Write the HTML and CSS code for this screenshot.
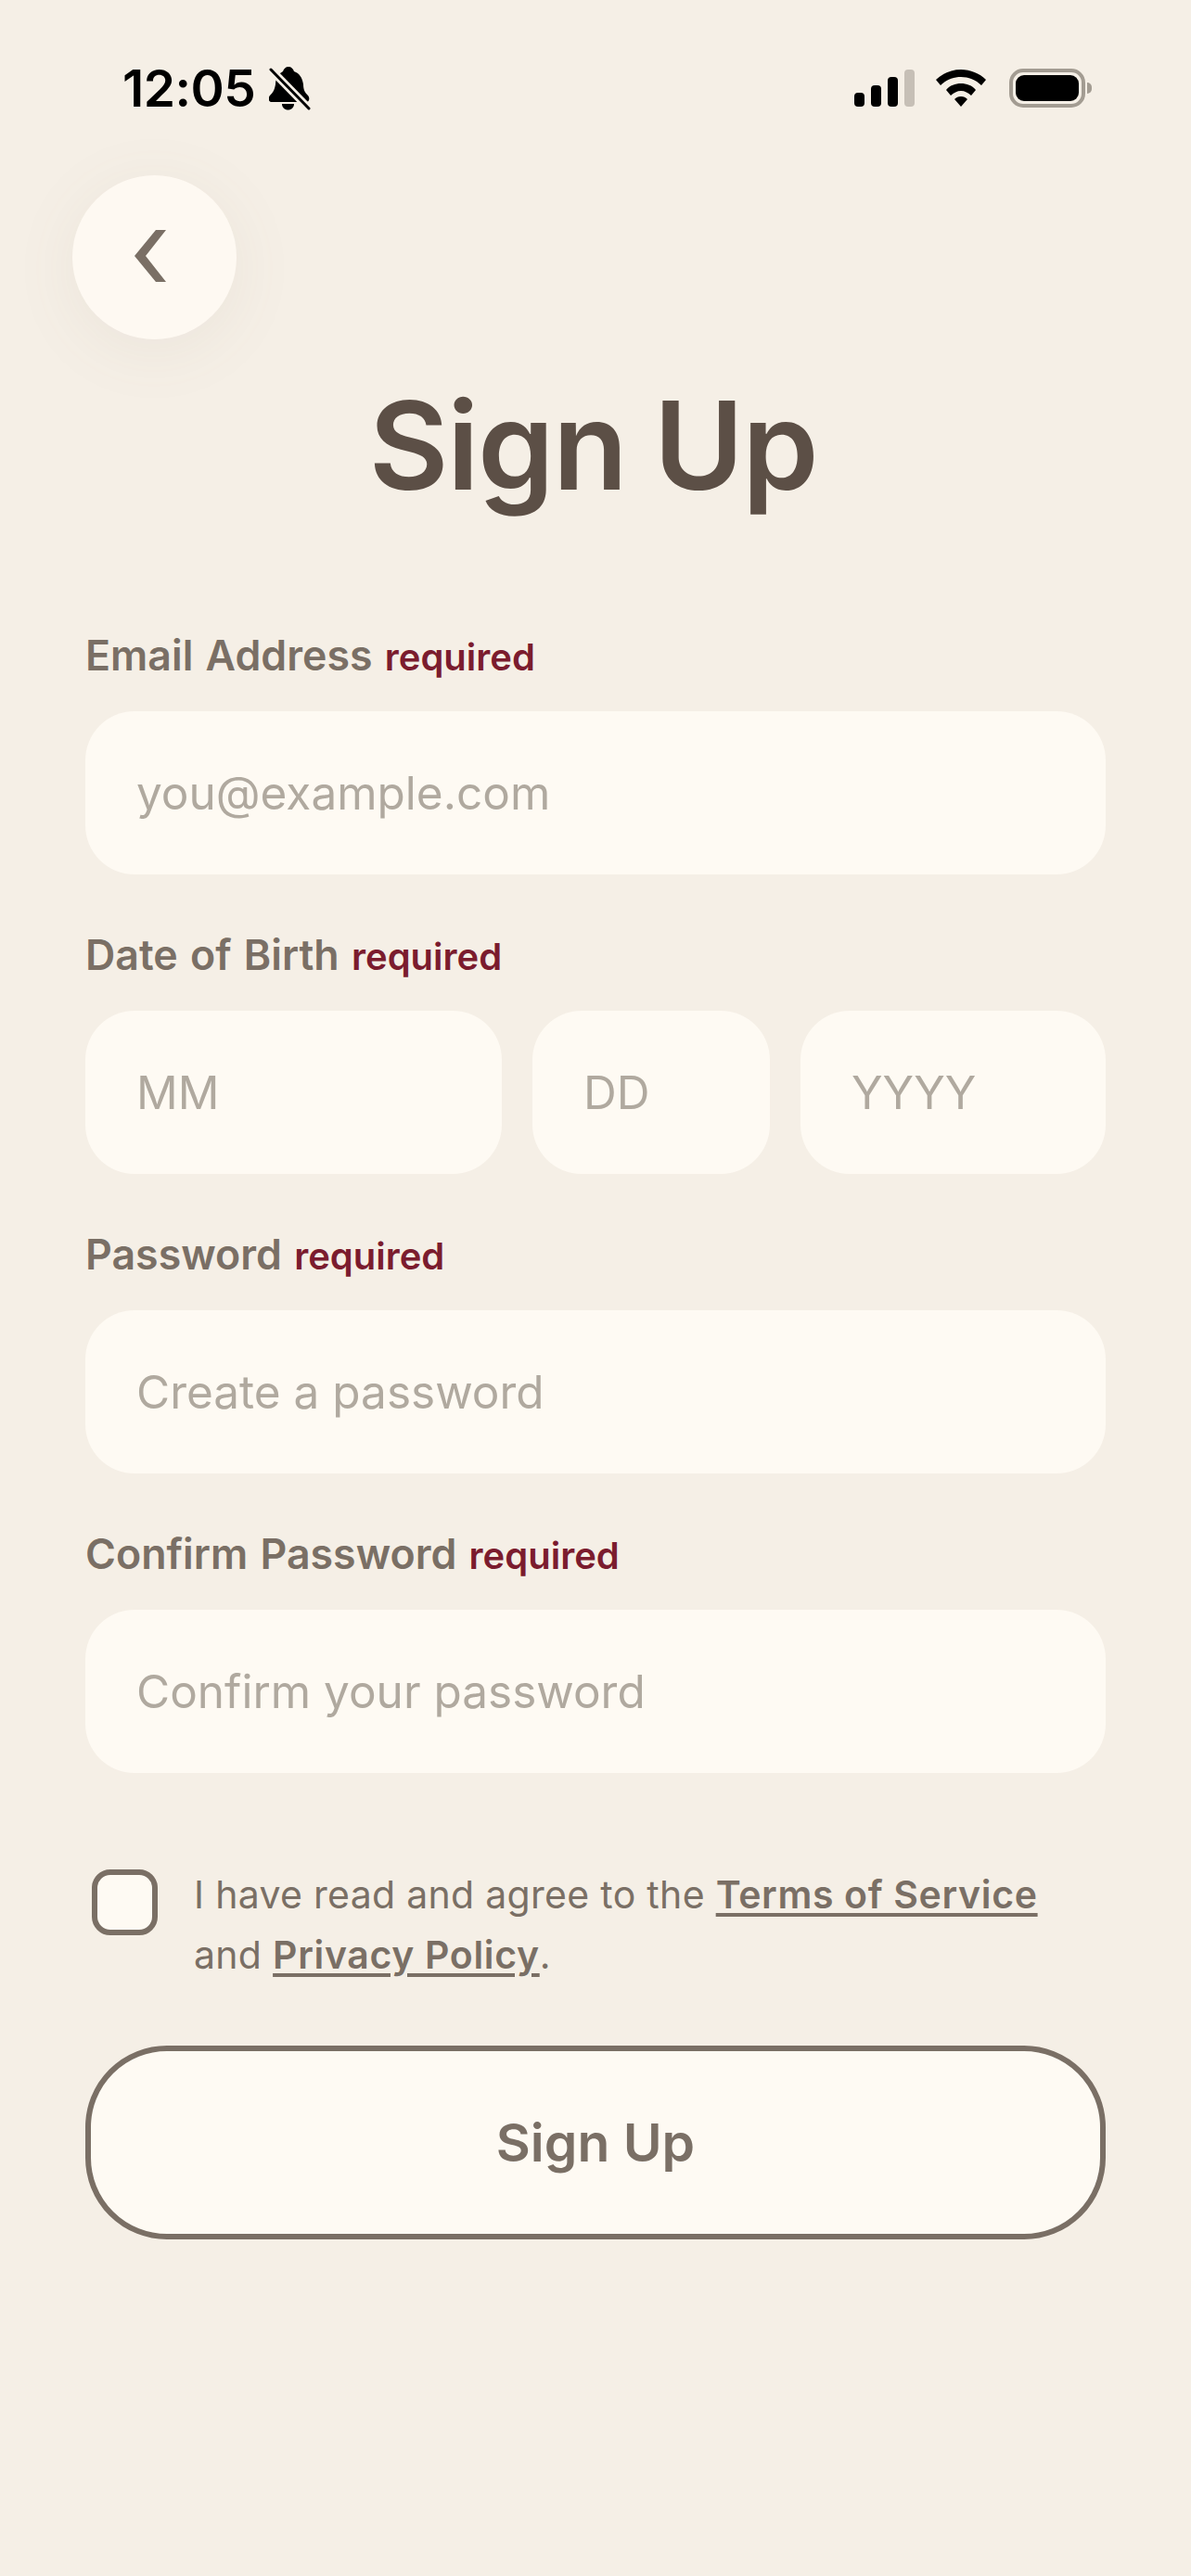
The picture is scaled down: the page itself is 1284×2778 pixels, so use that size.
FILE: index.html
```html
<!DOCTYPE html>
<html lang="en">
<head>
<meta charset="utf-8">
<title>Sign Up</title>
<link rel="stylesheet" href="styles.css">
</head>
<body>
<div class="screen">
  <header class="status">
    <div class="status-left">
      <span class="time">12:05</span>
      <svg class="bell" viewBox="0 0 45 47" width="45" height="47">
        <path d="M21 0c3 0 5 2 6 5 6 2 9 7 10 14 0 6 2 9 5 12 2 2 2 7-2 7H3c-4 0-4-5-2-7 3-3 5-6 6-12 0-7 4-12 8-14 1-3 3-5 6-5z" fill="#000"/>
        <path d="M14 40h13c0 4-3 6.500-6.500 6.500S14 44 14 40z" fill="#000"/>
        <path d="M0 1 44 46" stroke="#f5efe6" stroke-width="8.500"/>
        <path d="M2 3 43 45" stroke="#000" stroke-width="3" stroke-linecap="round"/>
      </svg>
    </div>
    <div class="status-right">
      <div class="signal">
        <i class="bar b1"></i><i class="bar b2"></i><i class="bar b3"></i><i class="bar b4"></i>
      </div>
      <svg class="wifi" viewBox="0 0 54 40" width="54" height="40">
        <path d="M27 0c10 0 20 4 27 11l-5 6C43 11 35 8 27 8S11 11 5 17l-5-6C7 4 17 0 27 0z" fill="#000"/>
        <path d="M27 15c6 0 12 2 16 7l-5 6c-3-3-7-5-11-5s-8 2-11 5l-5-6c4-5 10-7 16-7z" fill="#000"/>
        <path d="M27 29c3 0 5 1 7 3l-7 8-7-8c2-2 4-3 7-3z" fill="#000"/>
      </svg>
      <div class="battery"><div class="battery-fill"></div></div>
      <i class="battery-cap"></i>
    </div>
  </header>

  <button class="back" type="button" aria-label="Back">
    <svg viewBox="0 0 34 56" width="34" height="56"><path d="M34 0H23L0 28l23 28h11L12 28z" fill="#7a6f65"/></svg>
  </button>

  <h1 class="title">Sign Up</h1>

  <form class="form">
    <div class="group">
      <div class="label">Email Address <span class="req">required</span></div>
      <div class="field" role="textbox">you@example.com</div>
    </div>
    <div class="group">
      <div class="label">Date of Birth <span class="req">required</span></div>
      <div class="dob">
        <div class="field mm" role="textbox">MM</div>
        <div class="field dd" role="textbox">DD</div>
        <div class="field yy" role="textbox">YYYY</div>
      </div>
    </div>
    <div class="group">
      <div class="label">Password <span class="req">required</span></div>
      <div class="field" role="textbox">Create a password</div>
    </div>
    <div class="group">
      <div class="label">Confirm Password <span class="req">required</span></div>
      <div class="field" role="textbox">Confirm your password</div>
    </div>
    <div class="terms">
      <span class="check"></span>
      <p class="terms-text">I have read and agree to the <a class="link">Terms of Service</a> and <a class="link">Privacy Policy</a>.</p>
    </div>
    <button class="submit" type="button">Sign Up</button>
  </form>
</div>
</body>
</html>
```
FILE: styles.css
```css
* { box-sizing: border-box; }
html, body { margin: 0; padding: 0; }
body { background: #f5efe6; font-family: Inter, "Liberation Sans", sans-serif; }
.screen { width: 1284px; height: 2778px; overflow: hidden; display: flex; flex-direction: column; }

.status { display: flex; justify-content: space-between; align-items: center; height: 44px; margin-top: 73px; padding: 0 107px 0 132px; }
.status-left { display: flex; align-items: center; gap: 15px; }
.time { font-size: 55px; font-weight: 600; line-height: 44px; color: #000; letter-spacing: -0.5px; }
.bell { display: block; flex: none; }
.status-right { display: flex; align-items: center; }
.signal { display: flex; align-items: flex-end; gap: 7px; height: 40px; margin-right: 23px; }
.bar { display: block; width: 11px; background: #000; border-radius: 4px; }
.b1 { height: 15px; }
.b2 { height: 23px; }
.b3 { height: 32px; }
.b4 { height: 40px; background: #c6bfb6; }
.wifi { display: block; margin-right: 25px; }
.battery { width: 82px; height: 42px; border: 4px solid #a39c92; border-radius: 15px; padding: 3px; }
.battery-fill { width: 100%; height: 100%; background: #000; border-radius: 9px; }
.battery-cap { display: block; width: 5px; height: 12px; margin-left: 2px; background: #a39c92; border-radius: 0 5px 5px 0; }

.back { width: 177px; height: 177px; margin: 72px 0 0 78px; padding: 0 9px 4px 0; border: 0; border-radius: 50%; background: #fef9f2; box-shadow: 0 12px 70px rgba(122, 111, 101, 0.08); display: flex; align-items: center; justify-content: center; }
.back svg { display: block; }

.title { margin: 39px 0 0; padding-right: 5px; text-align: center; font-size: 132px; line-height: 150px; font-weight: 600; color: #5c4f46; letter-spacing: -1.6px; word-spacing: -2px; }

.form { display: flex; flex-direction: column; gap: 61px; margin-top: 126px; padding: 0 92px; }
.group { display: flex; flex-direction: column; gap: 34px; }
.label { height: 52px; font-size: 44.7px; line-height: 52px; font-weight: 600; color: #7a6f65; word-spacing: 2px; }
.req { font-size: 40px; line-height: 1; color: #7b1c2e; word-spacing: 0; }
.field { height: 176px; padding: 0 55px; border-radius: 53px; background: #fefaf3; display: flex; align-items: center; font-size: 49.5px; color: #b0a99f; }
.dob { display: flex; gap: 33px; }
.mm { width: 449px; }
.dd { width: 256px; }
.yy { width: 329px; }

.terms { display: flex; gap: 39px; margin-top: 38px; padding-left: 7px; }
.check { flex: none; width: 71px; height: 71px; margin-top: 5px; border: 6px solid #7a6f65; border-radius: 20px; background: #fefaf3; }
.terms-text { margin: 0; font-size: 41px; line-height: 65px; color: #7a6f65; letter-spacing: 0.3px; }
.link { font-weight: 600; letter-spacing: 0.65px; text-decoration: underline; text-underline-offset: 5px; }

.submit { height: 209px; margin-top: 4px; border: 6px solid #7a6f65; border-radius: 88px; background: #fefaf3; font-family: inherit; font-size: 57px; font-weight: 600; color: #7a6f65; }
```
